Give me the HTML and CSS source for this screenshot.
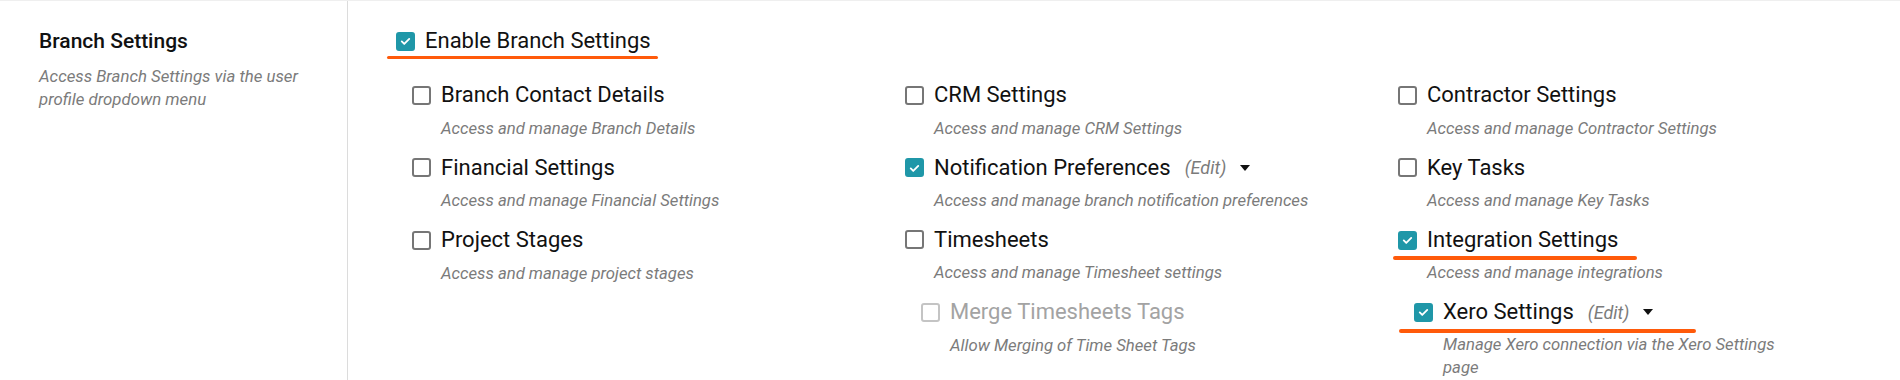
FILE: index.html
```html
<!DOCTYPE html>
<html lang="en">

<head>
  <meta charset="UTF-8" />
  <meta name="viewport" content="width=device-width, initial-scale=1.0" />
  <title>Branch Settings</title>
  <link rel="stylesheet" href="styles.css">
</head>

<body>
  <div class="page">

    <!-- Left description column -->
    <aside class="side">
      <h2 class="side-title">Branch Settings</h2>
      <p class="side-desc">Access Branch Settings via the user profile dropdown menu</p>
    </aside>

    <!-- Permission options -->
    <main class="main">
      <div class="opt-head master mark mark-enable">
        <span class="box on"><svg viewBox="0 0 18 18"><polyline points="4.5,9.5 7.5,12.5 13.5,6.5" /></svg></span>
        <span class="opt-label">Enable Branch Settings</span>
      </div>

      <div class="columns">
        <div class="col">
          <div class="opt">
            <div class="opt-head"><span class="box"></span><span class="opt-label">Branch Contact Details</span></div>
            <div class="opt-desc">Access and manage Branch Details</div>
          </div>
          <div class="opt">
            <div class="opt-head"><span class="box"></span><span class="opt-label">Financial Settings</span></div>
            <div class="opt-desc">Access and manage Financial Settings</div>
          </div>
          <div class="opt">
            <div class="opt-head"><span class="box"></span><span class="opt-label">Project Stages</span></div>
            <div class="opt-desc">Access and manage project stages</div>
          </div>
        </div>

        <div class="col">
          <div class="opt">
            <div class="opt-head"><span class="box"></span><span class="opt-label">CRM Settings</span></div>
            <div class="opt-desc">Access and manage CRM Settings</div>
          </div>
          <div class="opt">
            <div class="opt-head">
              <span class="box on"><svg viewBox="0 0 18 18"><polyline points="4.5,9.5 7.5,12.5 13.5,6.5" /></svg></span>
              <span class="opt-label">Notification Preferences</span>
              <span class="edit">(Edit)</span>
              <span class="caret"></span>
            </div>
            <div class="opt-desc">Access and manage branch notification preferences</div>
          </div>
          <div class="opt">
            <div class="opt-head"><span class="box"></span><span class="opt-label">Timesheets</span></div>
            <div class="opt-desc">Access and manage Timesheet settings</div>
          </div>
          <div class="opt sub disabled">
            <div class="opt-head"><span class="box"></span><span class="opt-label">Merge Timesheets Tags</span></div>
            <div class="opt-desc">Allow Merging of Time Sheet Tags</div>
          </div>
        </div>

        <div class="col">
          <div class="opt">
            <div class="opt-head"><span class="box"></span><span class="opt-label">Contractor Settings</span></div>
            <div class="opt-desc">Access and manage Contractor Settings</div>
          </div>
          <div class="opt">
            <div class="opt-head"><span class="box"></span><span class="opt-label">Key Tasks</span></div>
            <div class="opt-desc">Access and manage Key Tasks</div>
          </div>
          <div class="opt">
            <div class="opt-head mark mark-integration">
              <span class="box on"><svg viewBox="0 0 18 18"><polyline points="4.5,9.5 7.5,12.5 13.5,6.5" /></svg></span>
              <span class="opt-label">Integration Settings</span>
            </div>
            <div class="opt-desc">Access and manage integrations</div>
          </div>
          <div class="opt sub">
            <div class="opt-head mark mark-xero">
              <span class="box on"><svg viewBox="0 0 18 18"><polyline points="4.5,9.5 7.5,12.5 13.5,6.5" /></svg></span>
              <span class="opt-label">Xero Settings</span>
              <span class="edit">(Edit)</span>
              <span class="caret"></span>
            </div>
            <div class="opt-desc">Manage Xero connection via the Xero Settings page</div>
          </div>
        </div>
      </div>
    </main>

  </div>
</body>

</html>
```

FILE: styles.css
```css
:root {
  --teal: #1f97a8;
  --text: #111;
  --muted: #7b7b7b;
  --box-border: #767676;
  --divider: #dcdcdc;
  --marker: #ff5a0a;
}

* {
  box-sizing: border-box;
}

html,
body {
  margin: 0;
  padding: 0;
  font-family: Roboto, 'Liberation Sans', sans-serif;
  background: #fff;
  color: var(--text);
}

.page {
  display: flex;
  height: 380px;
  border-top: 1px solid #efefef;
  overflow: hidden;
}

.side {
  width: 348px;
  flex-shrink: 0;
  padding: 28px 39px 0 39px;
  border-right: 1px solid var(--divider);
}

.side-title {
  margin: 0;
  font-size: 21px;
  font-weight: 500;
  line-height: 24px;
}

.side-desc {
  margin: 12px 0 0;
  font-size: 16.8px;
  font-style: italic;
  line-height: 23px;
  color: var(--muted);
  width: 270px;
}

.main {
  padding: 27px 0 0 48px;
}

.opt-head {
  display: inline-flex;
  align-items: center;
  height: 26px;
}

.master {
  margin-bottom: 28px;
}

.box {
  width: 19px;
  height: 19px;
  border: 2px solid var(--box-border);
  border-radius: 3px;
  flex-shrink: 0;
  margin-right: 10px;
  display: flex;
  align-items: center;
  justify-content: center;
}

.box.on {
  background: var(--teal);
  border-color: var(--teal);
}

.box svg {
  width: 18px;
  height: 18px;
  fill: none;
  stroke: #fff;
  stroke-width: 2.2;
  stroke-linecap: round;
  stroke-linejoin: round;
}

.opt-label {
  font-size: 22px;
  line-height: 26px;
  white-space: nowrap;
}

.edit {
  margin-left: 14px;
  font-size: 18px;
  font-style: italic;
  color: var(--muted);
}

.caret {
  margin-left: 14px;
  width: 0;
  height: 0;
  border-left: 5.5px solid transparent;
  border-right: 5.5px solid transparent;
  border-top: 6px solid #111;
}

.columns {
  display: grid;
  grid-template-columns: repeat(3, 408px);
  column-gap: 85px;
  margin-left: 16px;
}

.col {
  display: flex;
  flex-direction: column;
  gap: 15px;
}

.opt-desc {
  margin-top: 8px;
  padding-left: 29px;
  font-size: 16.7px;
  font-style: italic;
  line-height: 23px;
  color: var(--muted);
}

.sub {
  margin-left: 16px;
}

.disabled .opt-label {
  color: #a3a3a3;
}

.disabled .box {
  border-color: #c4c4c4;
}

/* hand-drawn highlight strokes */
.mark {
  position: relative;
}

.mark::after {
  content: "";
  position: absolute;
  height: 3px;
  border-radius: 2px;
  background: var(--marker);
}

.mark-enable::after {
  left: -9px;
  right: -7px;
  bottom: -5px;
}

.mark-integration::after {
  left: -5px;
  right: -19px;
  bottom: -7px;
  height: 4px;
}

.mark-xero::after {
  left: -15px;
  right: -43px;
  bottom: -8px;
  height: 4px;
}
```
